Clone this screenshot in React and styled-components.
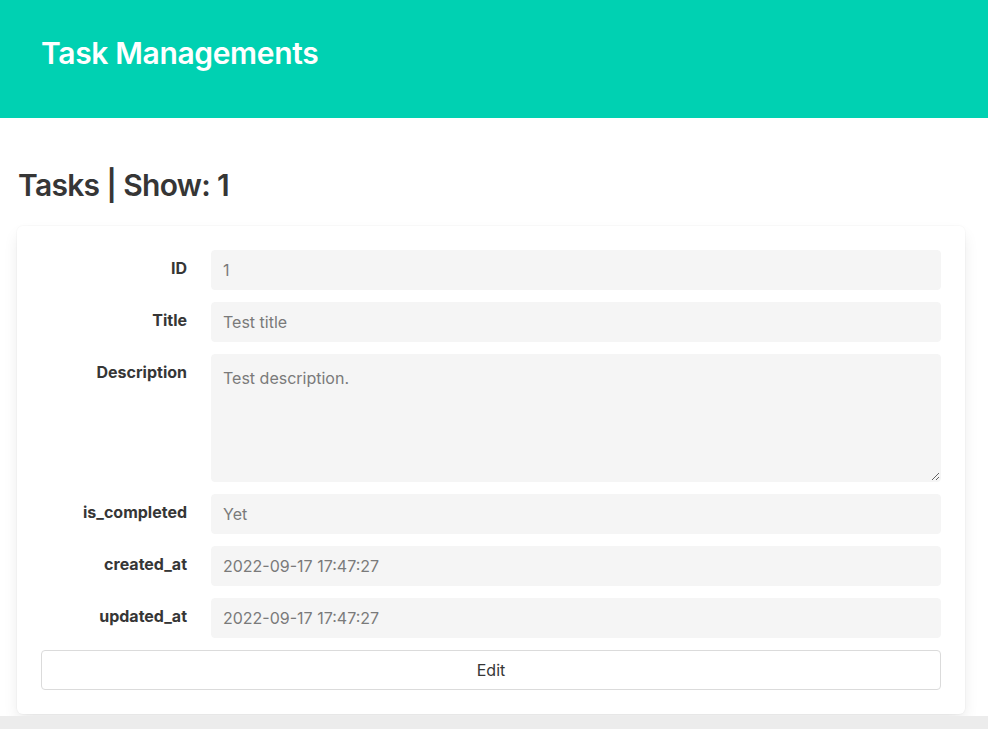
import React from 'react';
import styled, { createGlobalStyle } from 'styled-components';

const GlobalStyle = createGlobalStyle`
    * { box-sizing: border-box; }
    body {
        margin: 0;
        background: #fff;
        font-family: Inter, "Noto Sans", "Liberation Sans", sans-serif;
        color: #4a4a4a;
    }
`;

const Hero = styled.header`
    height: 118px;
    background: #00d1b2;
    padding: 35px 41px 0;
`;

const HeroTitle = styled.h1`
    margin: 0;
    color: #fff;
    font-size: 30px;
    font-weight: 600;
    line-height: 36px;
    letter-spacing: -0.35px;
`;

const Section = styled.main`
    padding: 49px 23px 2px 17px;
`;

const PageTitle = styled.h2`
    margin: 0 0 23px 1px;
    color: #363636;
    font-size: 30px;
    font-weight: 600;
    line-height: 36px;
    letter-spacing: -0.7px;
`;

const Box = styled.div`
    background: #fff;
    border-radius: 6px;
    padding: 24px;
    box-shadow: 0 8px 16px -2px rgba(10, 10, 10, 0.1), 0 0 0 1px rgba(10, 10, 10, 0.02);
    display: flex;
    flex-direction: column;
    gap: 12px;
`;

const Field = styled.div`
    display: flex;
    align-items: flex-start;
`;

const Label = styled.label`
    flex: 1;
    margin-right: 24px;
    text-align: right;
    padding-top: 6px;
    font-size: 16px;
    font-weight: 700;
    color: #363636;
    line-height: 24px;
`;

const Body = styled.div`
    flex: 5;
`;

const Input = styled.input`
    display: block;
    width: 100%;
    height: 40px;
    border: 1px solid #f5f5f5;
    border-radius: 4px;
    background: #f5f5f5;
    color: #7a7a7a;
    font: inherit;
    font-size: 16px;
    padding: 0 11px;
    outline: none;
`;

const TextArea = styled.textarea`
    display: block;
    width: 100%;
    height: 128px;
    border: 1px solid #f5f5f5;
    border-radius: 4px;
    background: #f5f5f5;
    color: #7a7a7a;
    font: inherit;
    font-size: 16px;
    line-height: 24px;
    padding: 11px 11px;
    resize: vertical;
    outline: none;
`;

const Button = styled.button`
    height: 40px;
    width: 100%;
    background: #fff;
    border: 1px solid #dbdbdb;
    border-radius: 4px;
    color: #363636;
    font: inherit;
    font-size: 16px;
    cursor: pointer;
`;

const Footer = styled.footer`
    height: 40px;
    background: #ececec;
`;

const fields = [
    { label: 'ID', value: '1' },
    { label: 'Title', value: 'Test title' },
    { label: 'Description', value: 'Test description.', multiline: true },
    { label: 'is_completed', value: 'Yet' },
    { label: 'created_at', value: '2022-09-17 17:47:27' },
    { label: 'updated_at', value: '2022-09-17 17:47:27' },
];

export default function App() {
    return (
        <>
            <GlobalStyle />
            <Hero>
                <HeroTitle>Task Managements</HeroTitle>
            </Hero>
            <Section>
                <PageTitle>Tasks | Show: 1</PageTitle>
                <Box>
                    {fields.map(f => (
                        <Field key={f.label}>
                            <Label>{f.label}</Label>
                            <Body>
                                {f.multiline
                                    ? <TextArea readOnly value={f.value} />
                                    : <Input readOnly type="text" value={f.value} />}
                            </Body>
                        </Field>
                    ))}
                    <Button>Edit</Button>
                </Box>
            </Section>
            <Footer />
        </>
    );
}
